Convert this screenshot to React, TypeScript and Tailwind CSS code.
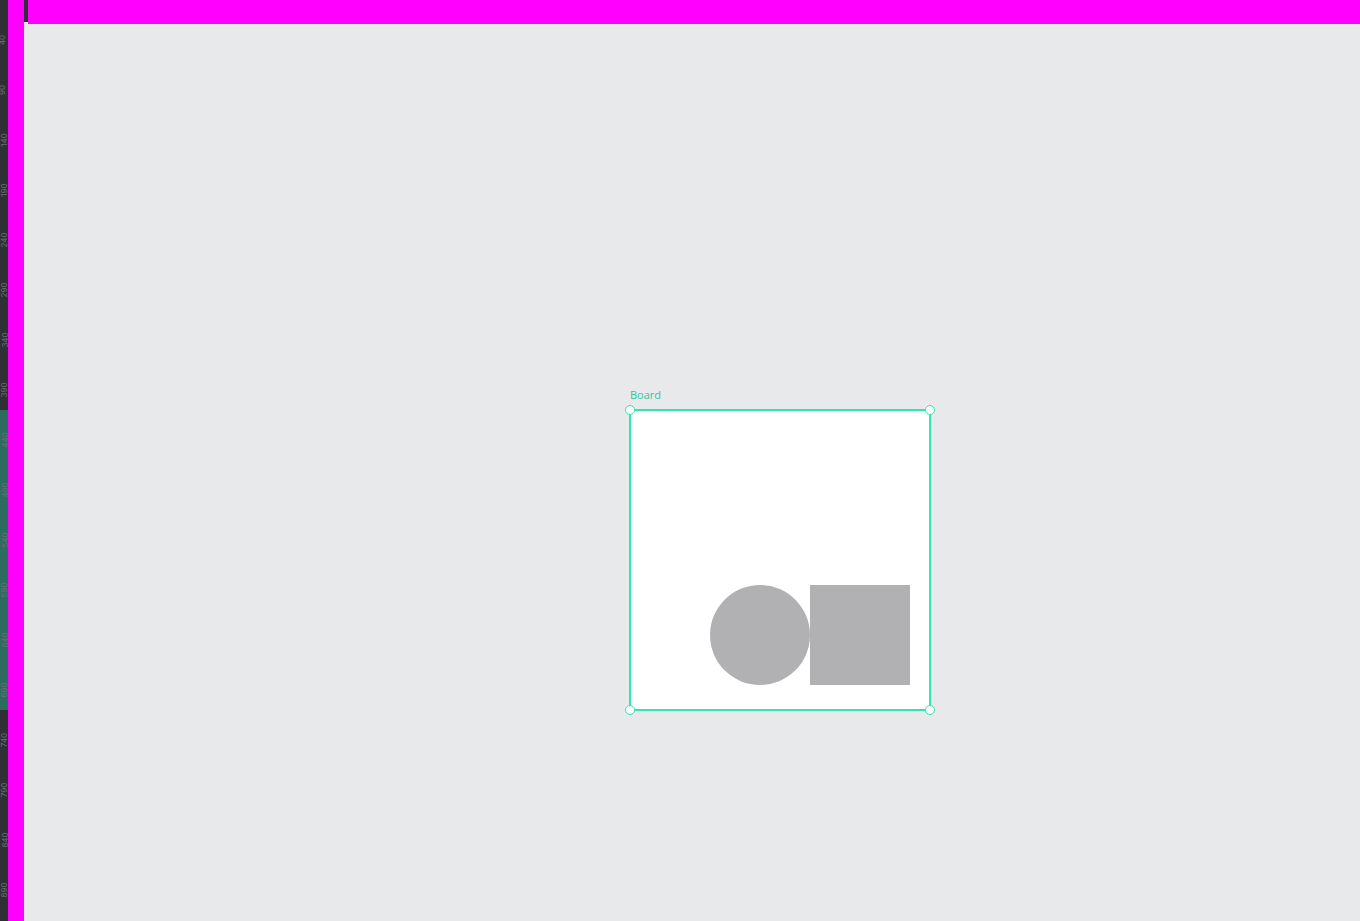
const marks = Array.from({ length: 18 }, (_, i) => i * 50 + 40);

function Ruler() {
  return (
    <div className="relative w-[8px] h-full bg-[#2e3035] overflow-hidden">
      <div className="absolute left-0 top-[410px] w-full h-[300px] bg-[#2e6b5f]" />
      <div className="relative flex flex-col items-start pt-[36px]">
        {marks.map((y) => (
          <div key={y} className="h-[50px] w-[8px] flex items-start">
            <span className="block -ml-[3px] text-[8px] leading-none text-[#6a6e75] -rotate-90 whitespace-nowrap">
              {y}
            </span>
          </div>
        ))}
      </div>
    </div>
  );
}

function Handle() {
  return <div className="w-[10px] h-[10px] rounded-full bg-white border-[1.5px] border-[#31e5b4]" />;
}

export default function App() {
  return (
    <div className="flex w-[1360px] h-[921px] overflow-hidden bg-[#e8e9eb] font-['Inter',sans-serif]">
      <div className="flex h-full shrink-0">
        <Ruler />
        <div className="w-[16px] h-full bg-[#ff00ff]" />
      </div>
      <div className="flex flex-col flex-1 h-full">
        <div className="flex h-[24px] shrink-0">
          <div className="w-[4px] h-[22px] bg-[#2e3035]" />
          <div className="flex-1 bg-[#ff00ff]" />
        </div>
        <div className="relative flex-1">
          <div className="absolute left-[605px] top-[365px] flex flex-col">
            <span className="h-[20px] pl-[1px] text-[11px] leading-none text-[#2fc79c] font-['Open_Sans',sans-serif]">
              Board
            </span>
            <div className="relative">
              <div className="w-[302px] h-[302px] bg-white border-2 border-[#31e5b4] flex items-end justify-end pr-[19px] pb-[24px]">
                <div className="w-[100px] h-[100px] rounded-full bg-[#b1b1b4]" />
                <div className="w-[100px] h-[100px] bg-[#b1b1b4]" />
              </div>
              <div className="absolute inset-[-4px] flex flex-col justify-between pointer-events-none">
                <div className="flex justify-between">
                  <Handle />
                  <Handle />
                </div>
                <div className="flex justify-between">
                  <Handle />
                  <Handle />
                </div>
              </div>
            </div>
          </div>
        </div>
      </div>
    </div>
  );
}
